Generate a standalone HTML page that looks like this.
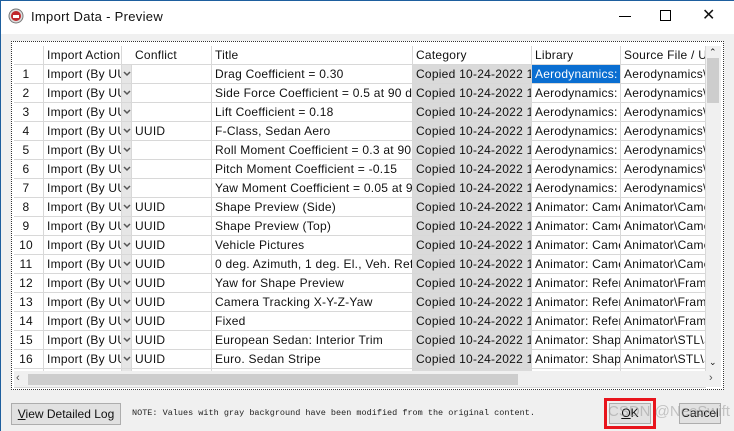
<!DOCTYPE html>
<html><head><style>
*{margin:0;padding:0;box-sizing:border-box}
body{width:734px;height:431px;background:#f0f0f0;font-family:"Liberation Sans",sans-serif;font-size:12px;color:#111;position:relative;overflow:hidden}
.a{position:absolute;white-space:nowrap;overflow:hidden}
.cell{position:absolute;height:19px;line-height:19px;white-space:nowrap;overflow:hidden;padding-left:3px;border-bottom:1px solid #d8d8d8;border-right:1px solid #d8d8d8;letter-spacing:0.25px}
</style></head><body>
<div class="a" style="left:0;top:0;width:734px;height:1px;background:#1e5f9e"></div>
<div class="a" style="left:0;top:0;width:1px;height:431px;background:#1e5f9e"></div>
<div class="a" style="left:1px;top:1px;width:733px;height:33px;background:#fff"></div>
<svg class="a" style="left:8px;top:8px" width="16" height="16"><circle cx="8" cy="8" r="7" fill="#ddd" stroke="#777"/><circle cx="8" cy="8" r="5" fill="#c0282d"/><rect x="5" y="7" width="6" height="3" fill="#fff"/></svg>
<div class="a" style="left:31px;top:9px;font-size:13px;letter-spacing:0.3px">Import Data - Preview</div>
<div class="a" style="left:619px;top:16px;width:12px;height:1px;background:#000"></div>
<div class="a" style="left:660px;top:10px;width:11px;height:11px;border:1px solid #000"></div>
<div class="a" style="left:702px;top:5px;font-size:16px">✕</div>
<div class="a" style="left:11px;top:41px;width:713px;height:349px;border:1px dotted #333;background:#fff"></div>
<div id="t"></div>
<script>
const cols=[14,44,122,132,212,413,532,621,706];
const rows=[
["Drag Coefficient = 0.30","","Fx"],["Side Force Coefficient = 0.5 at 90 deg","","Fy"],["Lift Coefficient = 0.18","","Fz"],["F-Class, Sedan Aero","UUID","Ba"],["Roll Moment Coefficient = 0.3 at 90 deg","","M"],["Pitch Moment Coefficient = -0.15","","M"],["Yaw Moment Coefficient = 0.05 at 90 deg","","M"],
["Shape Preview (Side)","UUID","Camera"],["Shape Preview (Top)","UUID","Camera"],["Vehicle Pictures","UUID","Camera"],["0 deg. Azimuth, 1 deg. El., Veh. Ref.","UUID","Camera"],["Yaw for Shape Preview","UUID","Refere"],["Camera Tracking X-Y-Z-Yaw","UUID","Refere"],["Fixed","UUID","Refere"],["European Sedan: Interior Trim","UUID","Shape"],["Euro. Sedan Stripe","UUID","Shape"],["","",""]];
const src=["Aerodynamics\\A","Animator\\Camer","Animator\\Frame","Animator\\STL\\Sh"];
let h='';
function c(i,y,txt,st){h+=`<div class="cell" style="left:${cols[i]}px;top:${y}px;width:${cols[i+1]-cols[i]}px;${st||''}">${txt}</div>`}
let y=46;
['','Import Action','','Conflict','Title','Category','Library','Source File / UUID'].forEach((t,i)=>c(i,y,t,i==2?'border-right:none':''));
const arrow='<svg width="8" height="19" style="display:block"><path d="M1 7 L4 10 L7 7" fill="none" stroke="#555" stroke-width="1.5"/></svg>';
rows.forEach((r,k)=>{y=65+k*19;const e=k==16;
c(0,y,e?'':`<span style="display:inline-block;width:24px;text-align:center">${k+1}</span>`,'padding-left:0');
c(1,y,e?'':'Import (By UUID)');
c(2,y,e?'':arrow,'background:#e6e6e6;padding-left:1px');
c(3,y,r[1]);c(4,y,r[0]);
c(5,y,e?'':'Copied 10-24-2022 10:00','background:#dadada');
let lib=k<7?'Aerodynamics: '+r[2]:'Animator: '+r[2];
c(6,y,e?'':lib,k==0?'background:#0a6ed1;color:#fff':'');
let s=k<7?src[0]:k<11?src[1]:k<14?src[2]:src[3];
c(7,y,e?'':s);});
document.getElementById('t').innerHTML=h;
</script>
<div class="a" style="left:706px;top:46px;width:15px;height:326px;background:#f0f0f0"></div>
<div class="a" style="left:709px;top:47px;font-size:9px">⌃</div>
<div class="a" style="left:707px;top:58px;width:12px;height:45px;background:#cdcdcd"></div>
<div class="a" style="left:709px;top:357px;font-size:9px">⌄</div>
<div class="a" style="left:14px;top:371px;width:707px;height:16px;background:#f0f0f0"></div>
<div class="a" style="left:16px;top:372px;font-size:11px;color:#555">‹</div>
<div class="a" style="left:28px;top:374px;width:490px;height:11px;background:#cdcdcd"></div>
<div class="a" style="left:709px;top:372px;font-size:11px;color:#555">›</div>
<div class="a" style="left:11px;top:403px;width:110px;height:22px;border:1px solid #adadad;background:#e1e1e1;text-align:center;line-height:20px"><u>V</u>iew Detailed Log</div>
<div class="a" style="left:132px;top:408px;font-family:'Liberation Mono',monospace;font-size:8.5px;color:#222">NOTE: Values with gray background have been modified from the original content.</div>
<div class="a" style="left:604px;top:398px;width:52px;height:31px;border:3px solid #e8141c"></div>
<div class="a" style="left:609px;top:403px;width:42px;height:21px;border:1px solid #adadad;background:#e1e1e1;text-align:center;line-height:19px"><u>O</u>K</div>
<div class="a" style="left:679px;top:403px;width:42px;height:21px;border:1px solid #adadad;background:#e1e1e1;text-align:center;line-height:19px">Cancel</div>
<div class="a" style="left:608px;top:403px;font-size:15px;color:rgba(150,150,150,0.5)">CSDN @NeoSwift</div>
</body></html>
